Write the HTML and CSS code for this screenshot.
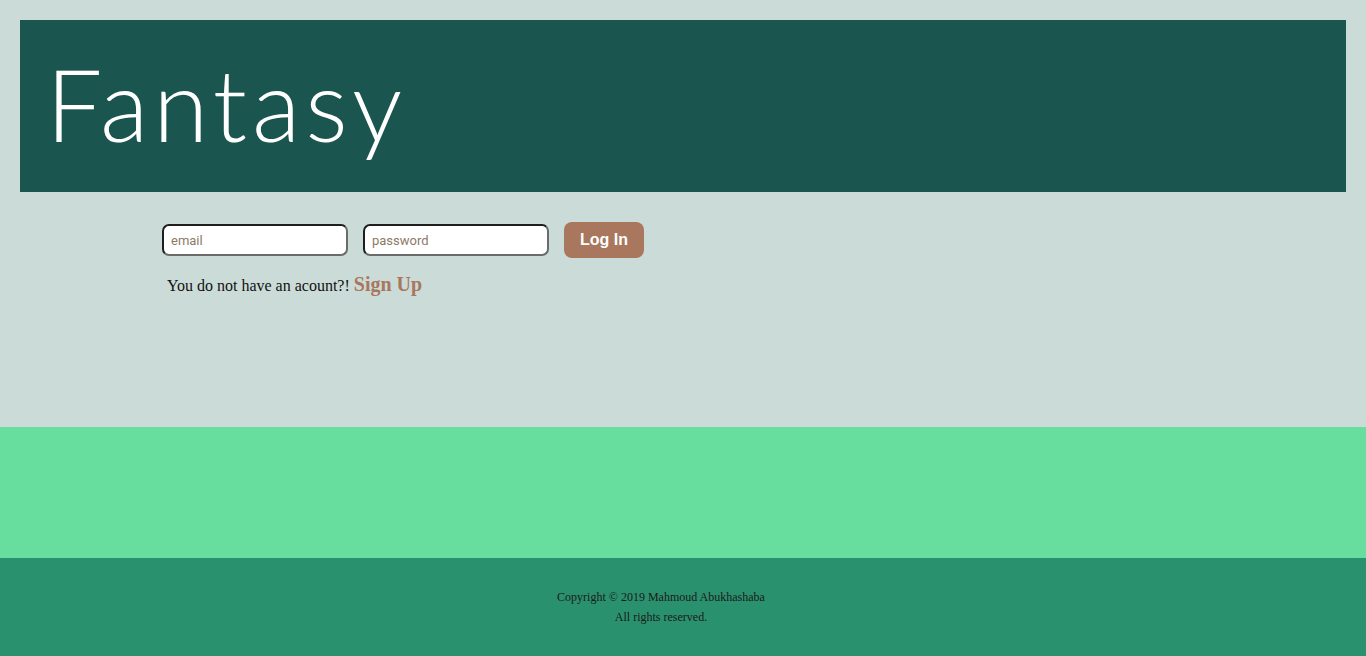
FILE: index.html
```html
<!DOCTYPE html>
<html>
<head>
<meta charset="utf-8">
<link rel="stylesheet" href="styles.css">
</head>
<body>
<div class="page">
  <header class="hero">
    <h1 class="logo">Fantasy</h1>
  </header>
  <main class="main">
    <form class="login">
      <input class="field" type="text" placeholder="email">
      <input class="field" type="password" placeholder="password">
      <button class="btn" type="button">Log In</button>
    </form>
    <p class="signup">You do not have an acount?! <a class="signup-link" href="#">Sign Up</a></p>
  </main>
  <section class="band"></section>
  <footer class="footer">
    <p class="copy">Copyright &copy; 2019 Mahmoud Abukhashaba</p>
    <p class="copy">All rights reserved.</p>
  </footer>
</div>
</body>
</html>
```

FILE: styles.css
```css
* { box-sizing: border-box; }
html, body { margin: 0; padding: 0; }
body {
  background: #cbdcd8;
  font-family: "Liberation Serif", serif;
  width: 1366px;
  height: 656px;
  overflow: hidden;
}
.page { display: flex; flex-direction: column; height: 656px; }
.hero {
  margin: 20px 20px 0 20px;
  height: 172px;
  background: #1b554f;
  display: flex;
  align-items: center;
  padding-left: 26px;
}
.logo {
  margin: 0;
  color: #ffffff;
  font-family: "Lato", "Liberation Sans", sans-serif;
  font-weight: 300;
  font-size: 100px;
  line-height: 1;
  letter-spacing: 5px;
  margin-top: -6px;
}
.main {
  height: 235px;
  padding: 30px 0 0 162px;
}
.login { display: flex; align-items: center; gap: 15px; }
.field {
  width: 186px;
  height: 32px;
  border: 2px solid #1e1e1e;
  border-right-color: #6b6b6b;
  border-bottom-color: #6b6b6b;
  border-radius: 7px;
  background: #fff;
  padding: 0 7px;
  font-family: "Roboto", "Liberation Sans", sans-serif;
  font-size: 13px;
  outline: none;
}
.field::placeholder { color: #8c7a66; }
.btn {
  width: 80px;
  height: 36px;
  border: none;
  border-radius: 8px;
  background: #a8775d;
  color: #fff;
  font-family: "Liberation Sans", sans-serif;
  font-weight: bold;
  font-size: 16px;
  padding: 0;
}
.signup {
  margin: 15px 0 0 5px;
  font-size: 16px;
  color: #111;
}
.signup-link {
  color: #a8775d;
  font-weight: bold;
  font-size: 20px;
  text-decoration: none;
}
.band { height: 131px; background: #68de9e; }
.footer {
  flex: 1;
  background: #2a916e;
  padding: 32px 44px 0 0;
  text-align: center;
}
.copy {
  margin: 0 0 6px 0;
  font-size: 12px;
  line-height: 14px;
  color: #1a1a1a;
}
```
